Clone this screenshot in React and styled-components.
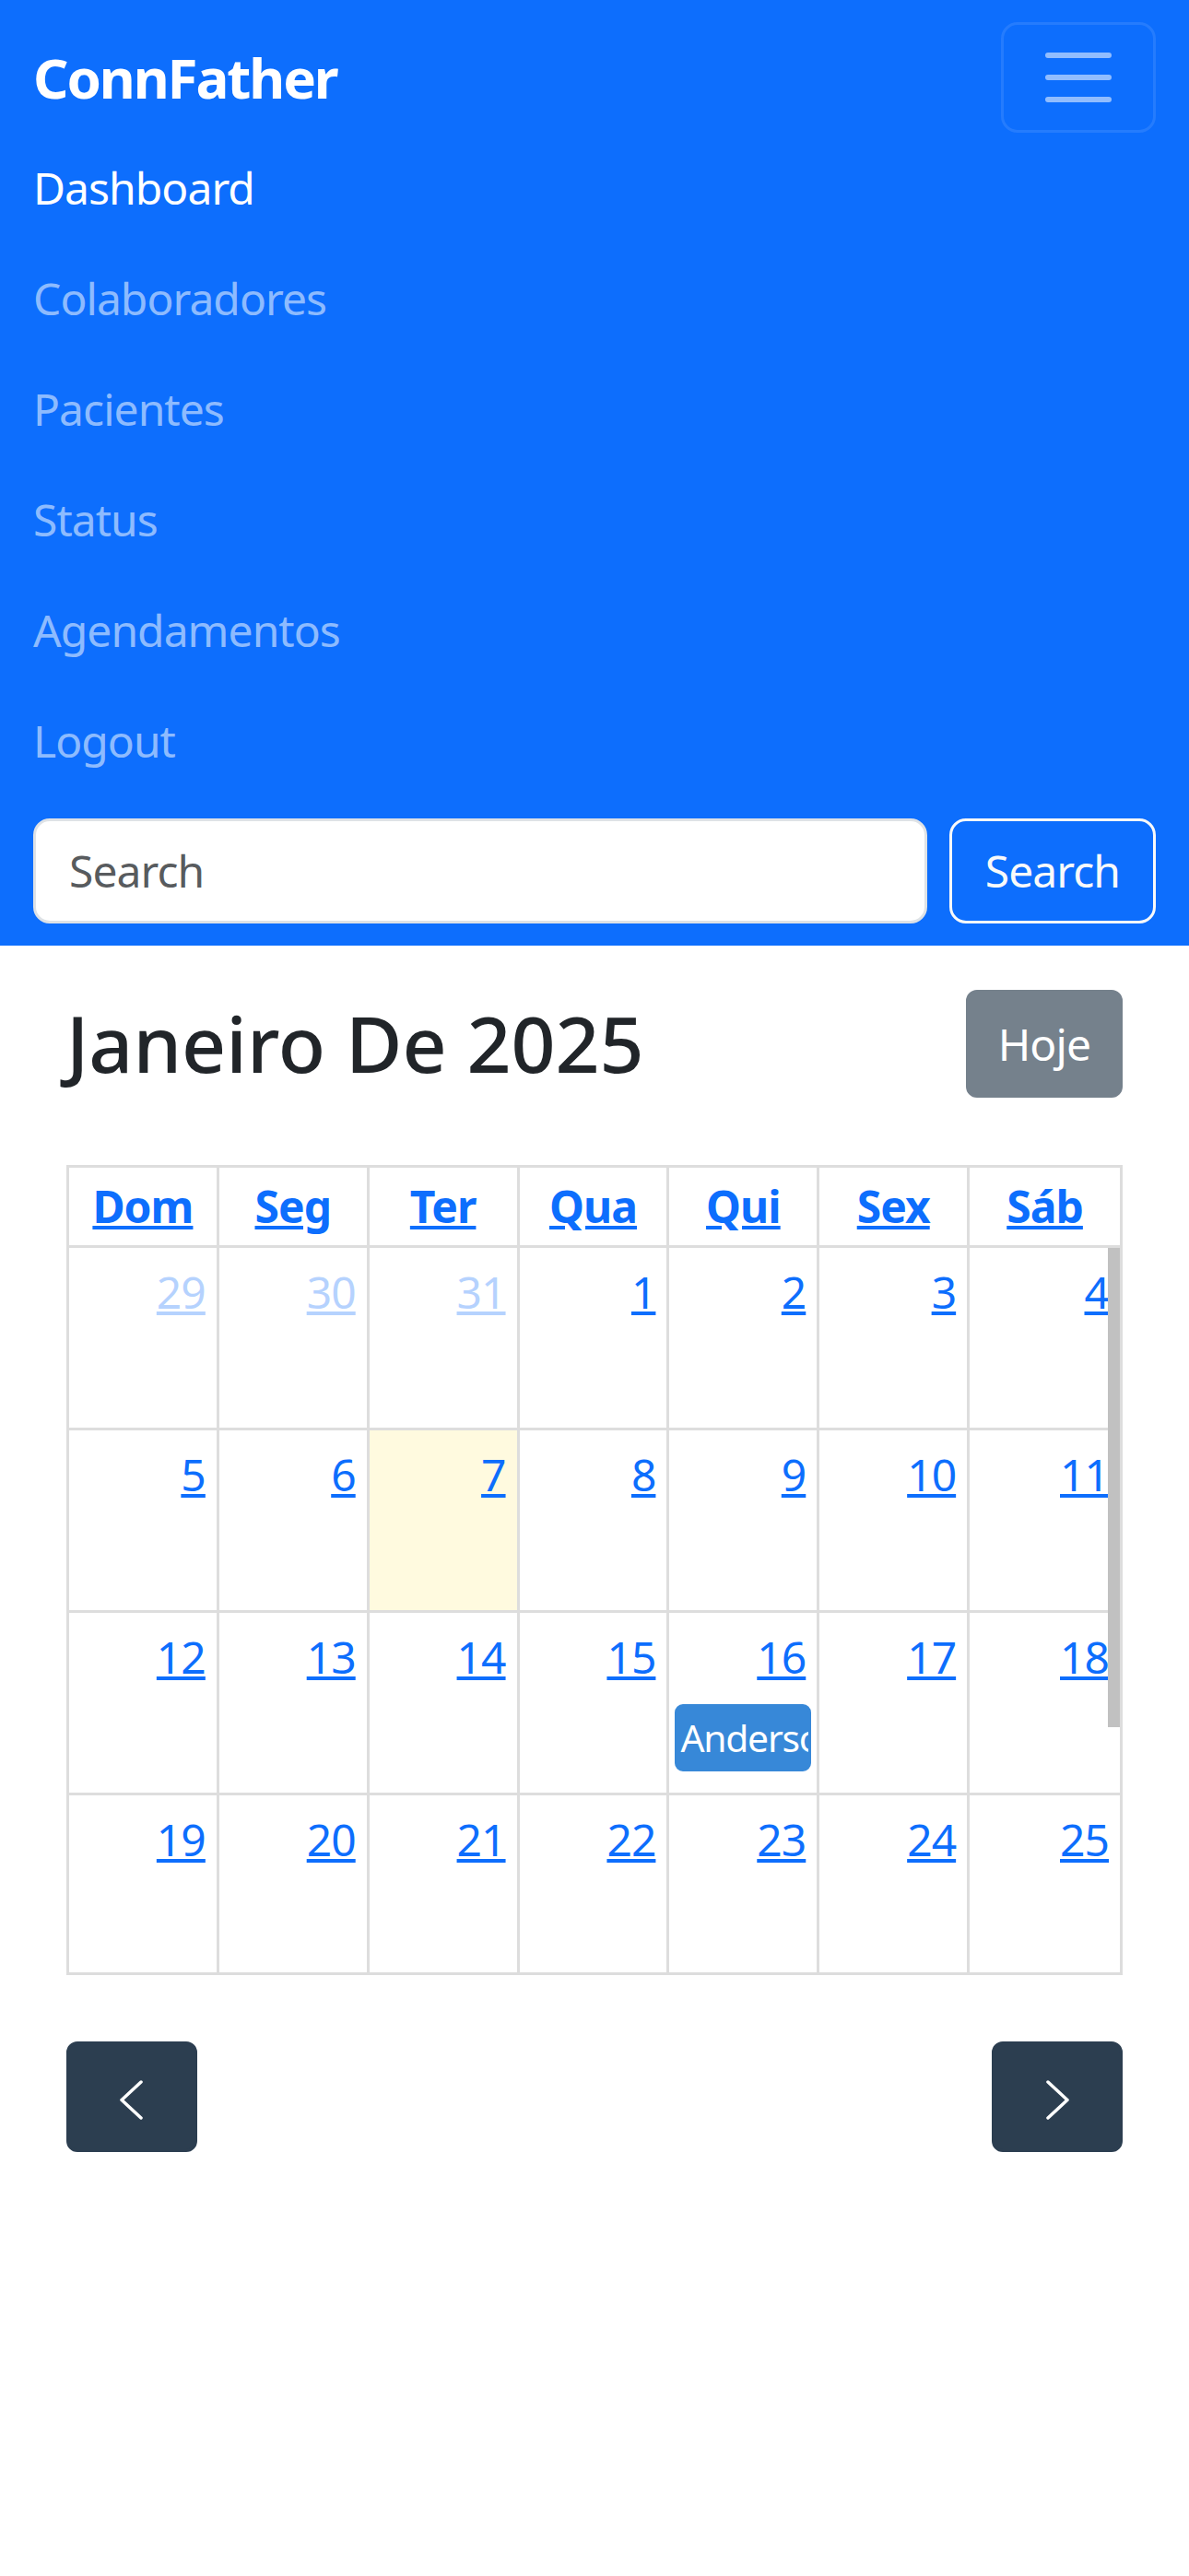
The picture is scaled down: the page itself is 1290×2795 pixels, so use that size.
import React from 'react';
import styled, { createGlobalStyle } from 'styled-components';

const GlobalStyle = createGlobalStyle`
  * { box-sizing: border-box; }
  body {
    margin: 0;
    font-family: "Noto Sans", "Open Sans", sans-serif;
    font-size: 48px;
    line-height: 1.5;
    letter-spacing: -0.02em;
    color: #212529;
    background: #fff;
  }
`;

const Navbar = styled.nav`
  background: #0d6efd;
  padding: 24px 36px;
`;

const TopRow = styled.div`
  display: flex;
  justify-content: space-between;
  align-items: center;
`;

const Brand = styled.a`
  color: #fff;
  font-size: 60px;
  font-weight: 700;
  line-height: 1.5;
  letter-spacing: -0.035em;
  padding: 15px 0;
  text-decoration: none;
`;

const Toggler = styled.button`
  width: 168px;
  height: 120px;
  padding: 12px 36px;
  display: flex;
  align-items: center;
  justify-content: center;
  background: transparent;
  border: 3px solid rgba(255, 255, 255, 0.1);
  border-radius: 18px;
`;

const NavList = styled.ul`
  list-style: none;
  margin: 0 0 24px;
  padding: 0;
`;

const NavLink = styled.a`
  display: block;
  padding: 24px 0;
  color: ${p => (p.$active ? '#fff' : 'rgba(255, 255, 255, 0.55)')};
  text-decoration: none;
`;

const SearchForm = styled.form`
  display: flex;
`;

const SearchInput = styled.input`
  flex: 1;
  min-width: 0;
  margin-right: 24px;
  padding: 18px 36px;
  font: inherit;
  letter-spacing: inherit;
  color: #212529;
  background: #fff;
  border: 3px solid #dee2e6;
  border-radius: 18px;
  &::placeholder { color: rgba(33, 37, 41, 0.75); }
`;

const SearchButton = styled.button`
  padding: 18px 36px;
  font: inherit;
  letter-spacing: inherit;
  color: #f8f9fa;
  background: transparent;
  border: 3px solid #f8f9fa;
  border-radius: 18px;
`;

const Main = styled.main`
  padding: 48px 72px 0;
`;

const Toolbar = styled.div`
  display: flex;
  justify-content: space-between;
  align-items: center;
  margin: ${p => (p.$footer ? '72px 0 0' : '0 0 73px')};
`;

const Title = styled.h2`
  margin: 0;
  font-size: 84px;
  font-weight: 500;
  line-height: 1.2;
  letter-spacing: 0;
`;

const CalButton = styled.button`
  display: flex;
  align-items: center;
  justify-content: center;
  padding: ${p => (p.$icon ? '21px 32px' : '19.5px 32px')};
  font: inherit;
  letter-spacing: inherit;
  color: #fff;
  background: #2c3e50;
  border: 3px solid #2c3e50;
  border-radius: 12px;
  opacity: ${p => (p.disabled ? 0.65 : 1)};
`;

const Grid = styled.div`
  border: 3px solid #ddd;
`;

const HeaderRow = styled.div`
  display: grid;
  grid-template-columns: repeat(7, 1fr);
  border-bottom: 3px solid #ddd;
`;

const HeaderCell = styled.div`
  text-align: center;
  padding: 6px 12px;
  font-weight: 700;
  border-right: 3px solid #ddd;
  &:last-child { border-right: none; }
  a { color: #0d6efd; }
`;

const BodyViewport = styled.div`
  position: relative;
  height: 786px;
  overflow: hidden;
`;

const WeekRow = styled.div`
  display: grid;
  grid-template-columns: repeat(7, 1fr);
  height: 198px;
  border-bottom: 3px solid #ddd;
`;

const DayCell = styled.div`
  min-width: 0;
  background: ${p => (p.$today ? 'rgba(255, 220, 40, 0.15)' : 'transparent')};
  border-right: 3px solid #ddd;
  &:last-child { border-right: none; }
`;

const DayTop = styled.div`
  display: flex;
  flex-direction: row-reverse;
`;

const DayNumber = styled.a`
  padding: 12px;
  color: #0d6efd;
  text-decoration: underline;
  opacity: ${p => (p.$other ? 0.3 : 1)};
`;

const Event = styled.div`
  margin: 3px 6px 0;
  padding: 3px;
  font-size: 40.8px;
  letter-spacing: -0.03em;
  color: #fff;
  background: #3788d8;
  border: 3px solid #3788d8;
  border-radius: 9px;
  white-space: nowrap;
  overflow: hidden;
`;

const ScrollThumb = styled.div`
  position: absolute;
  top: 0;
  right: 0;
  width: 13px;
  height: 520px;
  background: #c1c1c1;
`;

const navItems = ['Dashboard', 'Colaboradores', 'Pacientes', 'Status', 'Agendamentos', 'Logout'];
const weekDays = ['Dom', 'Seg', 'Ter', 'Qua', 'Qui', 'Sex', 'Sáb'];

// [day, outside month, today, event]
const weeks = [
  [[29, 1], [30, 1], [31, 1], [1], [2], [3], [4]],
  [[5], [6], [7, 0, 1], [8], [9], [10], [11]],
  [[12], [13], [14], [15], [16, 0, 0, 'Anderson'], [17], [18]],
  [[19], [20], [21], [22], [23], [24], [25]],
  [[26], [27], [28], [29], [30], [31], [1, 1]],
  [[2, 1], [3, 1], [4, 1], [5, 1], [6, 1], [7, 1], [8, 1]],
];

function Chevron({ dir }) {
  const pts = dir === 'left' ? '46,20 25,39.5 46,59' : '26,20 47,39.5 26,59';
  return (
    <svg width="72" height="72" viewBox="0 0 72 72">
      <polyline points={pts} fill="none" stroke="#fff" strokeWidth="3.5" strokeLinecap="round" strokeLinejoin="round" />
    </svg>
  );
}

export default function App() {
  return (
    <>
      <GlobalStyle />
      <Navbar>
        <TopRow>
          <Brand href="#">ConnFather</Brand>
          <Toggler type="button">
            <svg width="90" height="90" viewBox="0 0 30 30">
              <path d="M4 7h22M4 15h22M4 23h22" stroke="rgba(255,255,255,0.55)" strokeWidth="2" strokeLinecap="round" />
            </svg>
          </Toggler>
        </TopRow>
        <NavList>
          {navItems.map((item, i) => (
            <li key={item}>
              <NavLink href="#" $active={i === 0}>{item}</NavLink>
            </li>
          ))}
        </NavList>
        <SearchForm onSubmit={e => e.preventDefault()}>
          <SearchInput type="search" placeholder="Search" />
          <SearchButton type="submit">Search</SearchButton>
        </SearchForm>
      </Navbar>

      <Main>
        <Toolbar>
          <Title>Janeiro De 2025</Title>
          <CalButton disabled>Hoje</CalButton>
        </Toolbar>

        <Grid>
          <HeaderRow>
            {weekDays.map(d => (
              <HeaderCell key={d}><a href="#">{d}</a></HeaderCell>
            ))}
          </HeaderRow>
          <BodyViewport>
            {weeks.map((week, wi) => (
              <WeekRow key={wi}>
                {week.map(([num, other, today, event], di) => (
                  <DayCell key={di} $today={!!today}>
                    <DayTop>
                      <DayNumber href="#" $other={!!other}>{num}</DayNumber>
                    </DayTop>
                    {event && <Event>{event}</Event>}
                  </DayCell>
                ))}
              </WeekRow>
            ))}
            <ScrollThumb />
          </BodyViewport>
        </Grid>

        <Toolbar $footer>
          <CalButton type="button" $icon><Chevron dir="left" /></CalButton>
          <CalButton type="button" $icon><Chevron dir="right" /></CalButton>
        </Toolbar>
      </Main>
    </>
  );
}
